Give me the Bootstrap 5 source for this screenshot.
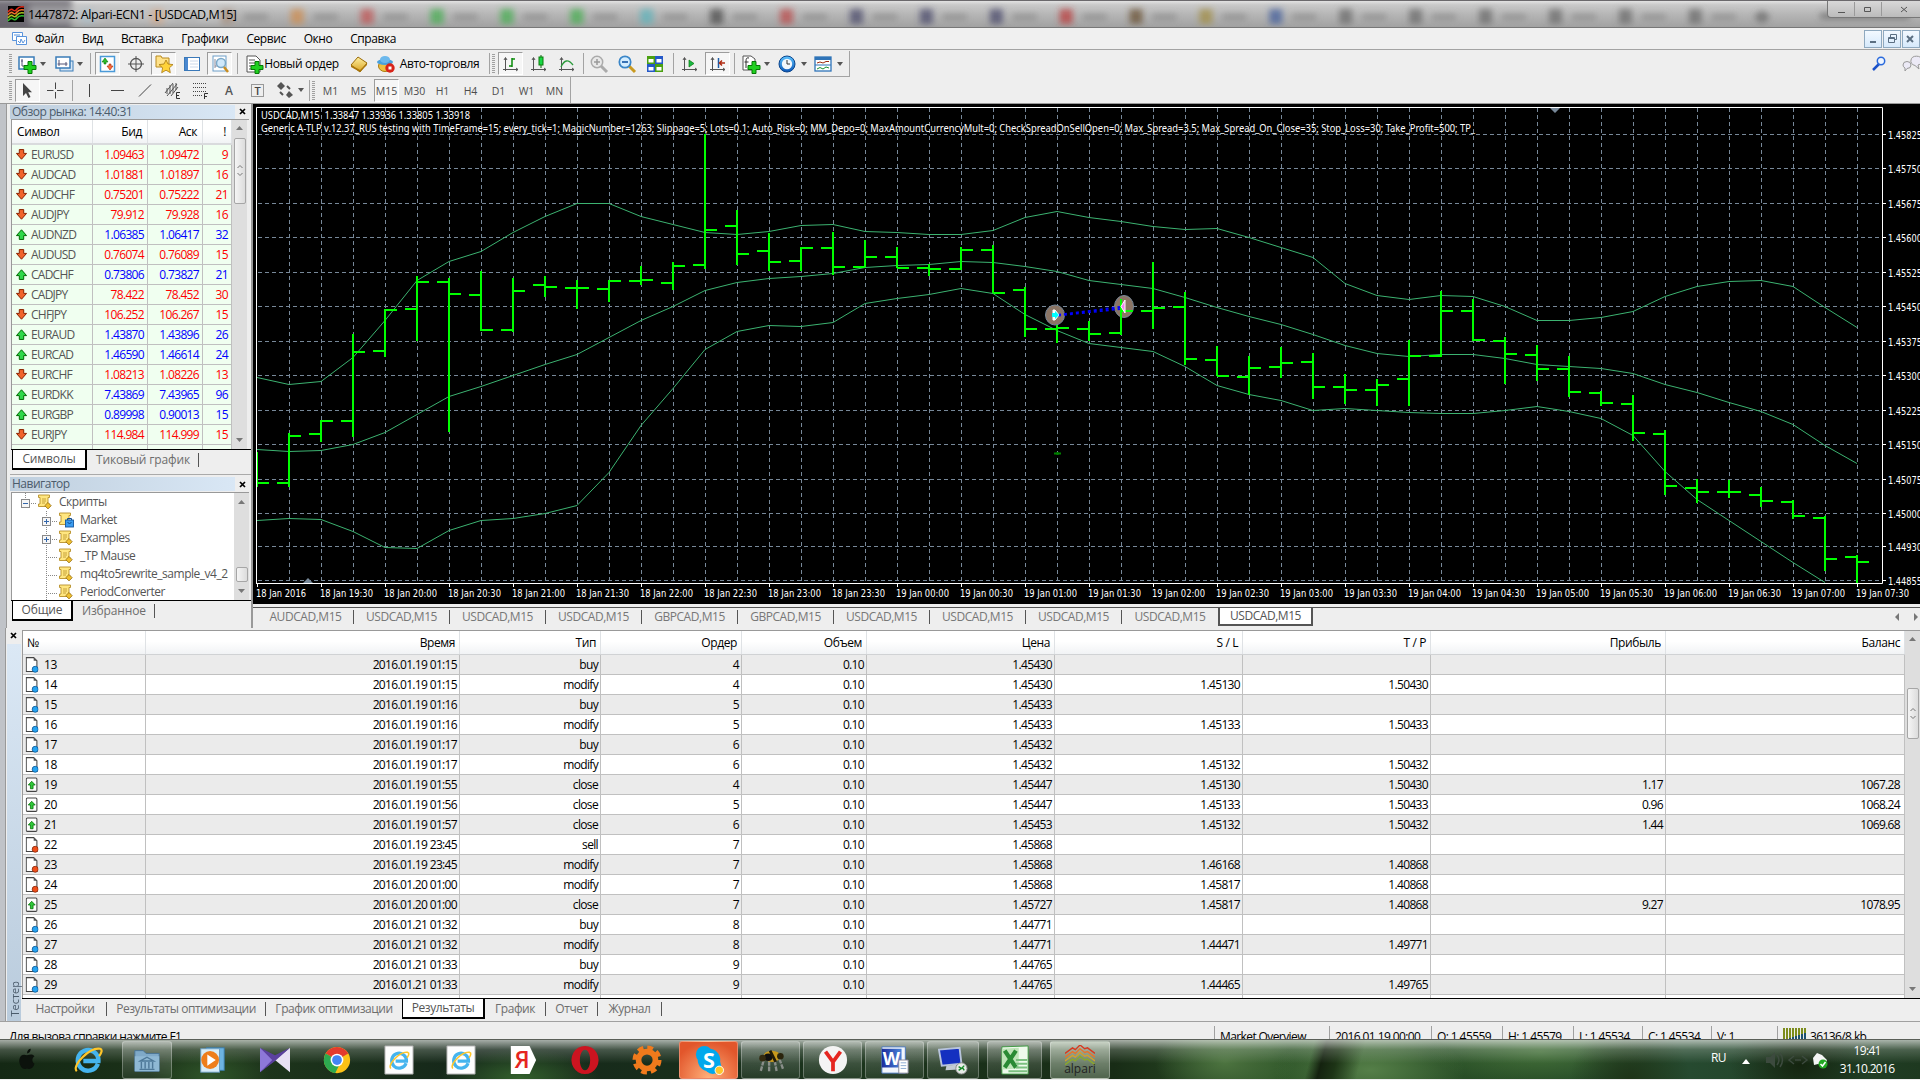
<!DOCTYPE html>
<html lang="ru">
<head>
  <meta charset="UTF-8" />
  <meta name="viewport" content="width=device-width, initial-scale=1.0" />
  <title>1447872: Alpari-ECN1 - [USDCAD,M15]</title>
  <link href="https://cdn.jsdelivr.net/npm/bootstrap@5.3.0/dist/css/bootstrap.min.css" rel="stylesheet" />
  <style>
    body {
      width: 1920px;
      height: 1080px;
      overflow: hidden;
      background: #eee;
      color: #000;
      font: 12px/1 "Open Sans", "Noto Sans", sans-serif;
      letter-spacing: -0.66px;
      white-space: nowrap;
    }

    svg { display: block; overflow: visible; flex: none; }
    .ms-px { margin-left: 1px; }

    /* title bar */
    .titlebar {
      height: 28px;
      border-top: 1px solid #6b696c;
      border-bottom: 1px solid #777;
      background: linear-gradient(#e2e2e2, #c9c9c9 15%, #b4b4b4 55%, #a2a2a2);
      overflow: hidden;
    }
    .titlebar .caption { font-size: 12.5px; letter-spacing: -0.42px; padding-top: 2px; }
    .winbtns {
      top: 0; right: 0; width: 93px; height: 17px;
      border: 1px solid #777; border-width: 0 0 1px 1px;
      border-bottom-left-radius: 4px;
      background: linear-gradient(#d8d8d8, #bbb);
    }

    /* menu and toolbars */
    .menubar { height: 22px; border-bottom: 1px solid #a3a3a3; background: #f0f0f0; padding-left: 12px; letter-spacing: -0.45px; }
    .menuitem { margin-right: 18px; }
    .mdibtn { width: 18px; height: 18px; border: 1px solid #8fa9bf; background: linear-gradient(#f3f9ff, #d6e9fb); }
    .toolline { height: 26px; padding-left: 7px; }
    .toolline.t1 { margin-top: 1px; letter-spacing: -0.35px; }
    .toolbox1 { width: 843px; border: 1px solid #a3a3a3; border-width: 0 1px 1px 0; height: 26px; }
    .toolbox2 { width: 564px; border-right: 1px solid #a3a3a3; height: 26px; }
    .grip { height: 19px; background: repeating-linear-gradient(#a0a0a0 0 1px, transparent 1px 2px); }
    .tsep { height: 21px; width: 1px; background: #a3a3a3; }
    .pressed {
      height: 23px;
      border: 1px solid #fff; border-top-color: #9c9c9c; border-left-color: #9c9c9c;
      background: #f6f6f6;
    }
    .tf { color: #4d4d4d; font-size: 10.5px; letter-spacing: 0; padding-top: 2px; }
    .caret { width: 0; border: 3px solid transparent; border-top: 4px solid #555; border-bottom: 0; }

    /* docked panels */
    #middle { height: 525px; border-top: 1px solid #999; }
    .edge { width: 7px; background: #c0c3c8; border-right: 1px solid #999; }
    .dock { width: 246px; border-right: 2px solid #999; padding-left: 3px; }
    .dockhead { height: 15px; }
    .docktitle { width: 225px; height: 14px; background: linear-gradient(90deg, #bfcfde, #d9e7f5); color: #4b5b6b; letter-spacing: -0.5px; padding-left: 2px; }
    .sunken { border: 1px solid #999; border-width: 1px 0 0 1px; width: 238px; margin-left: 1px; }
    #mwbox { height: 330px; }
    .mw { display: grid; grid-template-columns: 81px 55px 55px 29px; }
    .mwhead { height: 25px; border-bottom: 2px solid #d9dbdd; background: linear-gradient(#fff 45%, #f1f3f5); }
    .mwhead > div { border-right: 1px solid #dfe2e5; padding: 1px 5px 0; letter-spacing: -0.4px; }
    .mwrow { height: 20px; border-bottom: 1px solid #c0c0c0; background: #f0fff0; }
    .mwrow > div { border-right: 1px solid #c0c0c0; padding-right: 3px; }
    .mwrow .sym { color: #555; padding-left: 4px; letter-spacing: -0.75px; }
    .mwrow .sym span { margin-left: 4px; }
    .up { color: #00f; }
    .down { color: #f00; }
    .vscroll { width: 15px; background: #dedede; }
    .thumb { border: 1px solid #a6a6a6; border-radius: 2px; background: linear-gradient(90deg, #f5f5f5, #dcdcdc); }
    #mwthumb { width: 12px; height: 66px; margin-top: 1px; }
    #navthumb { width: 12px; height: 15px; }
    .pagetabs { border-top: 1px solid #000; color: #6d6d6d; letter-spacing: -0.15px; height: 22px; }
    .pagetab-on { border: 2px solid #000; border-width: 0 2px 2px 1px; background: #fff; height: 20px; color: #555; }
    .pagetext { height: 20px; }
    #ptab1 { width: 75px; margin-left: 1px; }
    #ptab2 { width: 61px; margin-left: 1px; }
    #navhead { margin-top: 3px; border-top: 1px solid #aaa; height: 18px; padding-top: 1px; }
    #navbox { height: 108px; }
    .bar-r { width: 1px; height: 14px; background: #555; }
    .treerow { height: 18px; color: #555; letter-spacing: -0.48px; }
    .treerow span { margin-left: 6px; }

    .charttabs { height: 18px; margin-top: 3px; border-top: 1px solid #555; color: #777; letter-spacing: -0.45px; }
    .charttab { width: 96px; }
    .charttab-on { width: 95px; height: 18px; background: #fff; border: 2px solid #555; border-width: 0 2px 2px 2px; color: #555; }

    /* tester */
    .tester { height: 393px; }
    .strip { width: 17px; }
    .stripbar { width: 14px; background: linear-gradient(#dbe8f5, #b9cbdc); margin-left: 1px; }
    .vtext { writing-mode: vertical-rl; transform: rotate(180deg); color: #4b5b6b; letter-spacing: 0; font-size: 11px; }
    #rsbox { height: 368px; border: 1px solid #999; border-width: 1px 0 0 1px; margin-top: 2px; }
    #report { width: 1882px; overflow: hidden; background: #fff; }
    #rsthumb { width: 12px; height: 51px; margin-top: 8px; }
    .rs { display: grid; grid-template-columns: 123px 314px 141px 141px 125px 188px 188px 188px 235px 239px; }
    .rshead { height: 24px; border-bottom: 1px solid #d0d2d4; background: linear-gradient(#fff 45%, #f1f3f5); }
    .rshead > div { border-right: 1px solid #dfe2e5; padding: 0 4px; letter-spacing: -0.4px; }
    .rsrow { height: 20px; border-bottom: 1px solid #c0c0c0; background: #fff; }
    .rsrow:nth-child(odd) { background: #ebebeb; }
    .rsrow > div { border-right: 1px solid #c0c0c0; padding: 0 2px; }
    .rsrow > div:first-child { letter-spacing: -0.3px; }
    .rsrow > div:last-child, .rshead > div:last-child { padding-right: 4px; }
    .rsrow span { margin-left: 5px; }
    #testertabs { letter-spacing: -0.45px; }

    .statusbar { height: 18px; border-top: 1px solid #a0a0a0; overflow: hidden; letter-spacing: -0.6px; }
    .statcell { border-left: 1px solid #a0a0a0; margin-top: 4px; height: 20px; padding: 5px 0 0 5px; }

    /* taskbar */
    .taskbar {
      height: 40px;
      border-top: 1px solid #5a5f58;
      color: #fff;
      background:
        linear-gradient(rgba(255,255,255,.62), rgba(255,255,255,.2) 25%, rgba(255,255,255,0) 60%),
        linear-gradient(105deg, transparent 1270px, #14220f 1282px, #1d3416 1296px, transparent 1320px),
        radial-gradient(ellipse 95px 40px at 1370px 30px, #557f48, transparent),
        radial-gradient(ellipse 70px 40px at 1225px 22px, #4d7440, transparent),
        radial-gradient(ellipse 60px 60px at 1630px 40px, #1e3418, transparent),
        radial-gradient(ellipse 110px 34px at 1540px 12px, #44703a, transparent),
        radial-gradient(ellipse 80px 30px at 520px 38px, #33602c, transparent),
        radial-gradient(ellipse 60px 30px at 210px 36px, #2f5529, transparent),
        radial-gradient(ellipse 70px 50px at 1800px 24px, #14240f, transparent),
        linear-gradient(90deg, #142814, #1e361b 12%, #15271a 25%, #1b341c 45%, #182c16 58%, #2f5629 66%, #264b25 80%, #264a30 88%, #1e3920);
    }
    .task { height: 38px; border: 1px solid rgba(255,255,255,.28); border-radius: 3px; background: linear-gradient(rgba(255,255,255,.28), rgba(255,255,255,.06)); }
    .task-hot { background: radial-gradient(circle at 50% 100%, #ffb07a, #e2562b 80%); }
    .task-on { background: linear-gradient(rgba(235,245,230,.6), rgba(150,170,145,.45)); }
    .tasklabel { position: absolute; bottom: 3px; left: 0; right: 0; text-align: center; color: #222; letter-spacing: 0; }
  </style>
</head>
<body>

<!-- icon sprite, every symbol on a 20x20 box -->
<svg width="0" height="0" class="position-absolute">
  <defs>
    <linearGradient id="gy" x2="0" y2="1"><stop stop-color="#fff0a0"/><stop offset="1" stop-color="#d8a220"/></linearGradient>
    <linearGradient id="gb" x2="0" y2="1"><stop stop-color="#5ec4ff"/><stop offset="1" stop-color="#0a56b8"/></linearGradient>
    <linearGradient id="gw" x2="1" y2="0"><stop stop-color="#1c2c9c"/><stop offset="1" stop-color="#4a84d8"/></linearGradient>
  </defs>
  <symbol id="i-plus" viewBox="0 0 20 20"><path d="M11 7.500h4v4h4v4h-4v4h-4v-4h-4v-4h4z" fill="#1fd01f" stroke="#067806"/></symbol>
  <symbol id="i-newchart" viewBox="0 0 20 20"><rect x="2" y="3" width="15" height="12" fill="#fff" stroke="#3a7cb8" stroke-width="1.5"/><path d="M5 5v7h9M4 7h2M12 10v3" stroke="#557" fill="none"/><use href="#i-plus"/></symbol>
  <symbol id="i-profiles" viewBox="0 0 20 20"><rect x="6" y="7" width="13" height="10" fill="#d5e6f5" stroke="#3a7cb8"/><rect x="2" y="3" width="14" height="11" fill="#fff" stroke="#3a7cb8" stroke-width="1.5"/><path d="M5 6v6M3.500 10h10M12 8v4" stroke="#557"/></symbol>
  <symbol id="i-updown" viewBox="0 0 20 20"><rect x="2.500" y="2.500" width="14" height="15" fill="#fff" stroke="#4a9ad8" stroke-width="1.500"/><path d="M4 8l3-4 3 4H8v2H6V8z" fill="#2dbb2d" stroke="#067806" stroke-width=".6"/><path d="M9 12l3 4 3-4h-2v-2h-2v2z" fill="#ff6a3a" stroke="#a22a06" stroke-width=".6"/></symbol>
  <symbol id="i-target" viewBox="0 0 20 20"><circle cx="10" cy="10" r="5.500" fill="none" stroke="#555" stroke-width="1.300"/><path d="M10 2v16M2 10h16" stroke="#555"/></symbol>
  <symbol id="i-favfolder" viewBox="0 0 20 20"><path d="M2 2h5l1 2h7v9H2z" fill="#ffe28a" stroke="#b88a20"/><path d="M12 6l2 4 5 .6-3.600 3.200.9 4.900-4.300-2.500-4.300 2.500.9-4.900L5 10.600l5-.6z" fill="#ffd23a" stroke="#a97a10" stroke-width=".8"/></symbol>
  <symbol id="i-window" viewBox="0 0 20 20"><rect x="2.500" y="3.500" width="15" height="13" fill="#fff" stroke="#3a78b8"/><path d="M3 4h3v12H3z" fill="#4a88d0"/><path d="M8 7h8M8 10h8M8 13h8" stroke="#ccd9ea"/></symbol>
  <symbol id="i-tester" viewBox="0 0 20 20"><rect x="3" y="2" width="13" height="15" fill="#fff" stroke="#6c9ec8"/><path d="M5 5v9M5 12h9" stroke="#889"/><circle cx="11" cy="9" r="4.500" fill="#cfe8fb" stroke="#7aa8c8" stroke-width="1.500"/><path d="M14 13l4 5" stroke="#c98d20" stroke-width="2.500"/></symbol>
  <symbol id="i-order" viewBox="0 0 20 20"><path d="M3 2h9l4 4v12H3z" fill="#fff" stroke="#555"/><path d="M5 6h6M5 9h8M5 12h4M5 15h3" stroke="#555"/><use href="#i-plus"/></symbol>
  <symbol id="i-gold" viewBox="0 0 20 20"><path d="M2 11L9 3l9 6-7 9z" fill="url(#gy)" stroke="#9a6a08"/><path d="M2 11l9 5 7-7v2l-7 7-9-5z" fill="#a9760c"/></symbol>
  <symbol id="i-auto" viewBox="0 0 20 20"><ellipse cx="9" cy="12" rx="6.500" ry="5.500" fill="#f0c040" stroke="#a97a10"/><ellipse cx="9" cy="8" rx="8" ry="3" fill="#4aa0dc"/><ellipse cx="9" cy="5.500" rx="5" ry="3.500" fill="#6cb8ec"/><circle cx="14" cy="14" r="4.700" fill="#d8241a"/><rect x="12.500" y="12.500" width="3" height="3" fill="#fff"/></symbol>
  <symbol id="i-axes" viewBox="0 0 20 20"><path d="M4.500 4v13M2 15.500h15M3 6l1.500-2.500L6 6M15 14l2 1.500-2 1.500" stroke="#555" fill="none"/></symbol>
  <symbol id="i-bars" viewBox="0 0 20 20"><use href="#i-axes"/><path d="M11 4v9M11 5h3M8 12h3" stroke="#0a8a0a" stroke-width="1.500"/></symbol>
  <symbol id="i-candle" viewBox="0 0 20 20"><use href="#i-axes"/><path d="M12 1v13" stroke="#0a6a0a"/><rect x="10" y="3" width="4" height="8" fill="#19d845" stroke="#0a7a0a"/></symbol>
  <symbol id="i-line" viewBox="0 0 20 20"><use href="#i-axes"/><path d="M4 13q5-11 12-2" stroke="#2a9a3a" stroke-width="1.300" fill="none"/></symbol>
  <symbol id="i-zin" viewBox="0 0 20 20"><path d="M12 12l6 6" stroke="#aaa" stroke-width="3"/><circle cx="8" cy="8" r="5.700" fill="#e8e8e8" stroke="#aaa" stroke-width="1.500"/><path d="M5 8h6M8 5v6" stroke="#999" stroke-width="1.500"/></symbol>
  <symbol id="i-zout" viewBox="0 0 20 20"><path d="M12 12l6 6" stroke="#c99a20" stroke-width="3"/><circle cx="8" cy="8" r="5.700" fill="#d4edff" stroke="#3a86c8" stroke-width="1.700"/><path d="M5 8h6" stroke="#1c5ca8" stroke-width="1.700"/></symbol>
  <symbol id="i-tile" viewBox="0 0 20 20"><path d="M2 2h8v8H2zM10 10h8v8h-8z" fill="#4aa010"/><path d="M10 2h8v8h-8zM2 10h8v8H2z" fill="#2458c8"/><path d="M3.500 5h5v3.500h-5zM11.500 5h5v3.500h-5zM3.500 13h5v3.500h-5zM11.500 13h5v3.500h-5z" fill="#fff"/></symbol>
  <symbol id="i-scroll" viewBox="0 0 20 20"><use href="#i-axes"/><path d="M9 6l5 3.500L9 13z" fill="#19b845" stroke="#0a7a0a" stroke-width=".7"/></symbol>
  <symbol id="i-shift" viewBox="0 0 20 20"><use href="#i-axes"/><path d="M10.500 4v10" stroke="#1c5ca8" stroke-width="1.500"/><path d="M17 9h-5M14 6.500L11.500 9l2.500 2.500" stroke="#b02a10" stroke-width="1.500" fill="none"/></symbol>
  <symbol id="i-indic" viewBox="0 0 20 20"><path d="M2 2h8l4 3v11H2z" fill="#fff" stroke="#555"/><path d="M8 4q-3-1-3 3v7M3.500 8h4" stroke="#333" fill="none"/><use href="#i-plus"/></symbol>
  <symbol id="i-clock" viewBox="0 0 20 20"><circle cx="10" cy="10" r="8" fill="url(#gb)" stroke="#0a448c"/><circle cx="10" cy="10" r="5.200" fill="#f2f7fc"/><path d="M10 6v4h3" stroke="#333" fill="none"/></symbol>
  <symbol id="i-templ" viewBox="0 0 20 20"><rect x="2" y="3" width="16" height="14" fill="#fff" stroke="#2f74b8" stroke-width="1.300"/><path d="M2 3h16v3H2z" fill="#2f74b8"/><path d="M2 11h16" stroke="#2f74b8"/><path d="M4 9l3-1 3 1 3-1.500h3" stroke="#a02a10" fill="none"/><path d="M4 15l3-1.500 3 1.500 3-2 3 1" stroke="#189030" fill="none"/></symbol>

  <symbol id="i-cursor" viewBox="0 0 20 20"><path d="M5 3v13l3-3 2.500 5 2-1-2.300-4.700H14z" fill="#444"/></symbol>
  <symbol id="i-cross" viewBox="0 0 20 20"><path d="M10.500 2.500V9M10.500 12v6.500M2 10.500h6.500M12 10.500h6.500" stroke="#444"/></symbol>
  <symbol id="i-vl" viewBox="0 0 20 20"><path d="M10.500 4v13" stroke="#444"/></symbol>
  <symbol id="i-hl" viewBox="0 0 20 20"><path d="M4 10.500h13" stroke="#444"/></symbol>
  <symbol id="i-tl" viewBox="0 0 20 20"><path d="M4 16.500L16 4.500" stroke="#444"/></symbol>
  <symbol id="i-chan" viewBox="0 0 20 20"><path d="M2 13L10 3M4 16L14 4M8 16l7-9M4 8v6M7 5v9M10 4v9M13 3v7" stroke="#555"/><path d="M17 12.500h-3.500v6H17M13.500 15.500H16" stroke="#333" fill="none"/></symbol>
  <symbol id="i-fibo" viewBox="0 0 20 20"><path d="M2 3.500h14M2 7.500h14M2 11.500h14M2 15.500h9" stroke="#444" stroke-dasharray="1 1"/><path d="M17 13.500h-3.500V19M13.500 16.500H16" stroke="#333" fill="none"/></symbol>
  <symbol id="i-arr" viewBox="0 0 20 20"><path d="M6 2l4 4-4 4-4-4zM14 11l4 4-4 3-3-3z" fill="#555"/><path d="M5 12l3 3M12 6l3 3" stroke="#555" stroke-width="2"/></symbol>

  <symbol id="i-down" viewBox="0 0 10 10"><path d="M3 .5h4v3.500h2.600L5 9.300.4 4H3z" fill="#f0642c" stroke="#8a2200" stroke-width=".9"/></symbol>
  <symbol id="i-up" viewBox="0 0 10 10"><path d="M3 9.500h4V6h2.600L5 .7.4 6H3z" fill="#2fd84a" stroke="#006a00" stroke-width=".9"/></symbol>
  <symbol id="i-script" viewBox="0 0 16 16"><path d="M1.500 1h11v2.500h-1.500v6.500h1.500v2.500h-11V10H3V3.500H1.500z" fill="#ffe680" stroke="#b8902a" stroke-width=".9"/><path d="M5 5h4M5 7h4M5 9h3" stroke="#b8902a" stroke-width=".8"/><path d="M11 8.500l3.200 3.200-3.200 3.200-3.200-3.200z" fill="#f0c030" stroke="#946c10" stroke-width=".8"/></symbol>
  <symbol id="i-scriptm" viewBox="0 0 16 16"><path d="M1.500 1h11v2.500h-1.500v6.500h1.500v2.500h-11V10H3V3.500H1.500z" fill="#ffe680" stroke="#b8902a" stroke-width=".9"/><rect x="7.500" y="8" width="8" height="7" fill="#3a9cf0" stroke="#1458a0" stroke-width=".9"/><path d="M9.500 8V6.500h4V8M9.500 10l2 2 2-2" stroke="#0f4a8c" fill="none"/></symbol>
  <symbol id="i-docb" viewBox="0 0 12 15"><path d="M.6.600h7l3 3v10H.6z" fill="#fff" stroke="#444"/><path d="M7.600.6v3h3" fill="#555"/><circle cx="9" cy="11.500" r="2.800" fill="#28a4f0" stroke="#0c5c9c" stroke-width=".8"/></symbol>
  <symbol id="i-docr" viewBox="0 0 12 15"><path d="M.6.600h7l3 3v10H.6z" fill="#fff" stroke="#444"/><path d="M7.600.6v3h3" fill="#555"/><circle cx="9" cy="11.500" r="2.800" fill="#f0501c" stroke="#8c2a0c" stroke-width=".8"/></symbol>
  <symbol id="i-docu" viewBox="0 0 12 15"><rect x=".6" y="1" width="10" height="12.500" rx="1" fill="#fff" stroke="#444"/><path d="M4.500 11h2.500V7.500h2L5.750 4 2.500 7.500h2z" fill="#2fc83a" stroke="#006a00" stroke-width=".7"/></symbol>

  <!-- taskbar icons, 32x32 -->
  <symbol id="t-apple" viewBox="0 0 32 32"><path d="M16 11c-7-3-9 4-8 8 1 5 4 8 8 6 4 2 7-1 8-5-3-2-3-6 0-8-2-3-5-2-8-1zM16 9c0-3 2-5 4-5 0 3-2 5-4 5z" fill="#0c120c"/></symbol>
  <symbol id="t-ie" viewBox="0 0 32 32"><path d="M26.500 20a11 11 0 1 1 .6-3H11" fill="none" stroke="#45b4ee" stroke-width="4.800"/><path d="M4 28C-2 22 18 2 29 4c3 1 1 5-1 8" fill="none" stroke="#ffc62a" stroke-width="2.300"/></symbol>
  <symbol id="t-folder" viewBox="0 0 32 32"><path d="M3 6h9l3 3h14v19H3z" fill="#7fa9c8" stroke="#4a7496"/><path d="M3 12h26v16H3z" fill="#8fb8d4"/><path d="M9 17l7-4 7 4zM10 18v7M14 18v7M18 18v7M22 18v7M8 26h16" stroke="#4e7898" fill="none" stroke-width="1.500"/></symbol>
  <symbol id="t-wmp" viewBox="0 0 32 32"><rect x="10" y="3" width="19" height="24" fill="#6db4e2" stroke="#3a7caa"/><rect x="4" y="4" width="20" height="25" fill="#d6ecf8" stroke="#6a9cc0"/><circle cx="14" cy="16" r="9.500" fill="#ee7d1a"/><path d="M11 10l9 6-9 6z" fill="#fff"/></symbol>
  <symbol id="t-km" viewBox="0 0 32 32"><path d="M0 3l16 13L0 29z" fill="#8d78d8"/><path d="M32 3L16 16l16 13z" fill="#e8e2f4"/><path d="M0 3l16 8L32 3 16 17 0 29l13-13z" fill="#5b419e"/></symbol>
  <symbol id="t-chrome" viewBox="0 0 32 32"><circle cx="16" cy="16" r="14" fill="#fbc116"/><path d="M16 16L3.900 9A14 14 0 0 1 28 9z" fill="#e33b2e"/><path d="M16 16L3.900 9A14 14 0 0 0 14 30l6-12z" fill="#2da94f"/><circle cx="16" cy="16" r="6.800" fill="#fff"/><circle cx="16" cy="16" r="5.200" fill="#4285f4"/></symbol>
  <symbol id="t-iefile" viewBox="0 0 32 32"><path d="M1 1h30v30H1z" fill="#fdfdfd" stroke="#aaa"/><use href="#t-ie" x="4" y="5" width="24" height="23"/></symbol>
  <symbol id="t-opera" viewBox="0 0 32 32"><path fill-rule="evenodd" d="M16 1a14.500 15 0 1 0 .01 0zM16 5a5.500 11 0 1 1-.01 0z" fill="#cc1420"/></symbol>
  <symbol id="t-gear" viewBox="0 0 32 32"><circle cx="16" cy="16" r="9" fill="none" stroke="#f07a1c" stroke-width="6"/><circle cx="16" cy="16" r="13" fill="none" stroke="#f07a1c" stroke-width="5" stroke-dasharray="6 4.200"/></symbol>
  <symbol id="t-bot" viewBox="0 0 32 32"><path d="M8 17l-3 11M14 17v11M20 17l2 11M25 15l4 11" stroke="#8a8f8a" stroke-width="2.500" stroke-dasharray="5 1"/><ellipse cx="17" cy="12" rx="9" ry="6" fill="#c89a1c"/><ellipse cx="13" cy="13" rx="4.500" ry="4" fill="#111"/><path d="M15 6l6 12" stroke="#221c08" stroke-width="3"/><circle cx="7" cy="14" r="3.500" fill="#332a10"/><circle cx="26" cy="12" r="3.500" fill="#2a240c"/></symbol>
  <symbol id="t-ybr" viewBox="0 0 32 32"><circle cx="16" cy="16" r="15" fill="#f4f4f4"/><path d="M8 7l8 11v10M24 7l-8 11" stroke="#e52620" stroke-width="4" fill="none"/></symbol>
  <symbol id="t-remote" viewBox="0 0 32 32"><path d="M1 5l22-2 2 17L4 22z" fill="#1430c0" stroke="#b8c4dc" stroke-width="2"/><path d="M9 22l10-1 3 5-14 1z" fill="#c4ccd4"/><circle cx="25" cy="25" r="6" fill="#e8ece8" stroke="#888"/><path d="M22 23l3 2-3 2M28 22l-2 2 2 3" stroke="#1a8a2a" fill="none" stroke-width="1.500"/></symbol>
  <symbol id="t-excel" viewBox="0 0 32 32"><path d="M2 2l28-1v30H2z" fill="#eefaec" stroke="#3c9a40"/><path d="M2 4l18-1v22L2 26z" fill="#bfe4b8"/><path d="M5 6l12 18M17 6L5 24" stroke="#2a8a34" stroke-width="4.500"/><path d="M17 16h12M17 20h12M17 24h12M9 28h20" stroke="#7cc080" stroke-width="2"/></symbol>
  <symbol id="t-alpari" viewBox="0 0 32 32"><g fill="none" stroke-width="1.500"><path d="M0 9l8-6 3 2 5-5 5 4 3-1 8 6" stroke="#d83820"/><path d="M0 13l8-6 3 2 5-5 5 4 3-1 8 6" stroke="#e8742c"/><path d="M0 17l8-6 3 2 5-5 5 4 3-1 8 6" stroke="#d0a030"/><path d="M0 21l8-6 3 2 5-5 5 4 3-1 8 6" stroke="#8aa82c"/></g></symbol>
</svg>

<!-- title bar -->
<div class="titlebar position-relative">
  <svg id="glass" class="position-absolute top-0 start-0" width="1920" height="27"></svg>
  <div class="position-relative d-flex align-items-center h-100 ps-2">
    <svg width="16" height="16" viewBox="0 0 16 16"><path d="M0 0h16v16H0z"/><g fill="none" stroke-width="1.600"><path d="M0 6q3-4 5-2t4-1 7-2" stroke="#e02a1a"/><path d="M0 9q3-4 5-2t4-1 7-2" stroke="#f0702a"/><path d="M0 12q3-4 5-2t4-1 7-2" stroke="#a8c020"/><path d="M0 15q3-4 5-2t4-1 7-2" stroke="#30c030"/></g></svg>
    <span class="caption ms-1">1447872: Alpari-ECN1 - [USDCAD,M15]</span>
  </div>
  <div class="winbtns position-absolute">
    <svg width="92" height="16" fill="none" stroke="#555"><path d="M26.500 1v14M53.500 1v14" stroke="#999"/><path d="M10 11.500h7M36.500 6.500h6v4h-6zM73 6l6 5M79 6l-6 5"/></svg>
  </div>
</div>

<!-- menu -->
<div class="menubar d-flex align-items-center">
  <svg width="15" height="15" viewBox="0 0 15 15" fill="#fff" stroke="#5a94dc"><path d="M.5 1.500h10v8H.5z"/><path d="M4.500 5.500h10v8h-10z"/><path d="M6 10l2 2 1-4 2 4 2-3M2 4h6" fill="none"/></svg>
  <div id="menu" class="d-flex flex-grow-1 ms-2"></div>
  <div class="d-flex overflow-hidden justify-content-start" id="mdi">
    <div class="mdibtn flex-shrink-0"><svg width="16" height="16"><path d="M5 11h6" stroke="#5b6f82" stroke-width="2"/></svg></div>
    <div class="mdibtn ms-px flex-shrink-0"><svg width="16" height="16" fill="none" stroke="#5b6f82"><path d="M6.500 6V3.500h6v5H10M4.500 6.500h6v5h-6zM4 7.500h6"/></svg></div>
    <div class="mdibtn ms-px flex-shrink-0"><svg width="16" height="16"><path d="M4 5l6 6M10 5l-6 6" stroke="#5b6f82" stroke-width="2"/></svg></div>
  </div>
</div>

<!-- toolbars -->
<div class="toolline t1 d-flex align-items-center">
  <div id="tools1" class="toolbox1 d-flex align-items-center"></div>
  <div class="d-flex ms-auto align-items-center gap-2">
    <svg width="14" height="16" viewBox="0 0 14 16"><path d="M1 14l6-6" stroke="#1a50c8" stroke-width="2.500"/><circle cx="9" cy="5" r="3.700" fill="#eef5ff" stroke="#2a6adc" stroke-width="1.500"/></svg>
    <svg class="ms-2" width="18" height="18" viewBox="0 0 18 18" fill="#eceaf6" stroke="#999"><path d="M9 5a5.500 4.500 0 1 1 7 5l1 4-4-3.500A5.500 4.500 0 0 1 9 5z"/><path d="M1 10a4 3.500 0 1 1 4 3.500L3 16v-3A4 3.500 0 0 1 1 10z"/></svg>
  </div>
</div>
<div class="toolline d-flex">
  <div id="tools2" class="toolbox2 d-flex align-items-center"></div>
</div>

<!-- middle: docks and chart -->
<div class="d-flex" id="middle">
  <div class="edge"></div>
  <div class="dock">
    <div class="dockhead d-flex align-items-center">
      <div class="docktitle d-flex align-items-center">Обзор рынка: 14:40:31</div>
      <svg class="ms-1" width="7" height="7"><path d="M1 1l5 5M6 1L1 6" stroke="#000" stroke-width="1.700"/></svg>
    </div>
    <div class="sunken d-flex" id="mwbox">
      <div class="overflow-hidden" id="market"></div>
      <div class="vscroll d-flex flex-column align-items-center">
        <svg width="7" height="17"><path d="M0 10l3.500-4L7 10z" fill="#777"/></svg>
        <div class="thumb d-flex align-items-center justify-content-center" id="mwthumb"><svg width="6" height="12" fill="none" stroke="#777"><path d="M.5 3L3 .5 5.500 3M.5 8L3 10.500 5.500 8"/></svg></div>
        <svg class="mt-auto" width="7" height="15"><path d="M0 4l3.500 4L7 4z" fill="#777"/></svg>
      </div>
    </div>
    <div class="pagetabs d-flex ms-px">
      <div class="pagetab-on d-flex align-items-center justify-content-center" id="ptab1">Символы</div>
      <div class="d-flex align-items-center pagetext ps-2 ms-px">Тиковый график<span class="bar-r ms-2"></span></div>
    </div>
    <div class="dockhead d-flex align-items-center" id="navhead">
      <div class="docktitle d-flex align-items-center">Навигатор</div>
      <svg class="ms-1" width="7" height="7"><path d="M1 1l5 5M6 1L1 6" stroke="#000" stroke-width="1.700"/></svg>
    </div>
    <div class="sunken d-flex bg-white" id="navbox">
      <div class="overflow-hidden flex-grow-1" id="tree"></div>
      <div class="vscroll d-flex flex-column align-items-center">
        <svg width="7" height="17"><path d="M0 11l3.500-4L7 11z" fill="#777"/></svg>
        <div class="thumb mt-auto" id="navthumb"></div>
        <svg width="7" height="18"><path d="M0 7l3.500 4L7 7z" fill="#777"/></svg>
      </div>
    </div>
    <div class="pagetabs d-flex ms-px">
      <div class="pagetab-on d-flex align-items-center justify-content-center" id="ptab2">Общие</div>
      <div class="d-flex align-items-center pagetext ps-2 ms-px">Избранное<span class="bar-r ms-2"></span></div>
    </div>
  </div>
  <div class="flex-grow-1">
    <svg id="chart" width="1667" height="500" viewBox="253 104 1667 500"></svg>
    <div class="charttabs d-flex align-items-center" id="charttabs"></div>
  </div>
</div>

<!-- strategy tester -->
<div class="tester d-flex">
  <div class="edge"></div>
  <div class="strip d-flex flex-column">
    <svg width="15" height="16"><path d="M5 5l5 5M10 5L5 10" stroke="#000" stroke-width="1.700"/></svg>
    <div class="stripbar flex-grow-1 d-flex align-items-end justify-content-center pb-1"><span class="vtext">Тестер</span></div>
  </div>
  <div class="flex-grow-1">
    <div class="d-flex" id="rsbox">
      <div id="report"></div>
      <div class="vscroll d-flex flex-column align-items-center">
        <svg width="7" height="49"><path d="M0 10l3.500-4L7 10z" fill="#777"/></svg>
        <div class="thumb d-flex align-items-center justify-content-center" id="rsthumb"><svg width="6" height="12" fill="none" stroke="#777"><path d="M.5 3L3 .5 5.500 3M.5 8L3 10.500 5.500 8"/></svg></div>
        <svg class="mt-auto" width="7" height="15"><path d="M0 4l3.500 4L7 4z" fill="#777"/></svg>
      </div>
    </div>
    <div class="pagetabs d-flex" id="testertabs"></div>
  </div>
</div>

<div class="statusbar d-flex" id="status"></div>
<div class="taskbar d-flex align-items-center" id="taskbar"></div>

<script>
  const icon = (id, s = 20, h = s) => `<svg width="${s}" height="${h}"><use href="#${id}"/></svg>`;
  const $ = id => document.getElementById(id);

  // icons that carry a letter
  const lettered = {
    'i-txt': '<text x="6" y="15" font-size="12" font-weight="600" fill="#555">A</text>',
    'i-lbl': '<rect x="4.500" y="4.500" width="12" height="12" fill="none" stroke="#444" stroke-dasharray="1 1"/><text x="7.500" y="14.500" font-size="11" font-weight="600" fill="#444">T</text>',
    't-ya': '<path d="M3 1h20l7 15-7 15H3z" fill="#fff"/><text x="7" y="25" font-size="25" font-weight="600" fill="#e52620">Я</text>',
    't-skype': '<circle cx="11" cy="10" r="9" fill="#00a8ec"/><circle cx="20" cy="22" r="9" fill="#00a8ec"/><circle cx="16" cy="16" r="12" fill="#00a8ec"/><text x="9.500" y="24" font-size="23" font-weight="700" fill="#fff">S</text><circle cx="27" cy="27" r="4.500" fill="#ffc62a" stroke="#fff"/>',
    't-word': '<path d="M2 2h25v28H2z" fill="#f2f6fc" stroke="#4a78c0"/><path d="M2 4h21v20H2z" fill="url(#gw)"/><text x="3" y="21" font-size="19" font-weight="700" fill="#fff">W</text><path d="M20 16h10v14H20z" fill="#fff" stroke="#889"/><path d="M22 19h6M22 22h6M22 25h6" stroke="#88a8d0"/>'
  };
  const draw = (id, s) => lettered[id] ? `<svg width="${s}" height="${s}" viewBox="0 0 ${id[0] === 't' ? '32 32' : '20 20'}">${lettered[id]}</svg>` : icon(id, s);

  // blurred browser tabs behind the glass
  const blobs = ['#8fb4c8', '#e08a4a', '#7a4a2a', '#d08a4a', '#c05050', '#3fae4a', '#3fae4a', '#3fae4a', '#5ab4bc', '#444', '#b44',
    '#446', '#446', '#446', '#b33', '#654a2a', '#a08a3a', '#3a5a9a', '#666', '#666', '#666', '#666', '#666', '#666'];
  $('glass').innerHTML = `<filter id="bl" x="-50%" width="200%" y="-50%" height="200%"><feGaussianBlur stdDeviation="3.2"/></filter><g filter="url(#bl)">
    <rect x="-10" y="-2" width="82" height="34" fill="#55535e" opacity=".75"/>` +
    blobs.map((c, i) => `<rect x="${81 + i * 69.9}" y="8" width="13" height="15" fill="${c}" opacity=".7"/><rect x="${104 + i * 69.9}" y="13" width="24" height="6" fill="#777" opacity=".5"/>`).join('') +
    `<rect x="30" y="5" width="205" height="18" fill="#ccc" opacity=".5"/><path d="M1755 16h14M1762 10v12M1820 15h90" stroke="#555" stroke-width="6" opacity=".6"/></g>`;

  $('menu').innerHTML = ['Файл', 'Вид', 'Вставка', 'Графики', 'Сервис', 'Окно', 'Справка'].map(t => `<span class="menuitem">${t}</span>`).join('');

  // toolbar description: [kind, width, icon or label]
  const tool = ([k, w, v]) => {
    const inner = k === 'sep' ? '<div class="tsep"></div>'
      : k === 'caret' ? '<div class="caret"></div>'
      : k === 'txt' ? v
      : k === 'tf' || k === 'tfon' ? `<span class="tf">${v}</span>`
      : v ? draw(v, 20) : '';
    const cls = k === 'grip' ? 'grip' : (k === 'on' || k === 'tfon') ? 'pressed' : '';
    return `<div class="d-flex align-items-center justify-content-center flex-shrink-0 ${cls}" style="width:${w}px">${inner}</div>`;
  };
  const gap = w => ['gap', w];
  $('tools1').innerHTML = [
    gap(2), ['grip', 3], gap(2), ['b', 25, 'i-newchart'], ['caret', 7], gap(5), ['b', 25, 'i-profiles'], ['caret', 7], gap(6), ['sep', 2], gap(4),
    ['on', 25, 'i-updown'], gap(3), ['b', 25, 'i-target'], gap(3), ['on', 25, 'i-favfolder'], gap(3), ['b', 25, 'i-window'], gap(3), ['on', 25, 'i-tester'],
    gap(4), ['sep', 2], gap(5), ['b', 21, 'i-order'], ['txt', 75, 'Новый ордер'], gap(7), ['b', 25, 'i-gold'], gap(2), ['b', 25, 'i-auto'], ['txt', 83, 'Авто-торговля'],
    gap(7), ['sep', 2], gap(2), ['grip', 3], gap(3), ['on', 25, 'i-bars'], gap(3), ['b', 25, 'i-candle'], gap(3), ['b', 25, 'i-line'], gap(3), ['sep', 2],
    gap(2), ['b', 25, 'i-zin'], gap(3), ['b', 25, 'i-zout'], gap(3), ['b', 25, 'i-tile'], gap(5), ['sep', 2], gap(3), ['b', 25, 'i-scroll'], gap(3),
    ['on', 25, 'i-shift'], gap(3), ['sep', 2], gap(3), ['b', 25, 'i-indic'], ['caret', 7], gap(4), ['b', 25, 'i-clock'], gap(1), ['caret', 7], gap(3), ['b', 25, 'i-templ'], gap(1), ['caret', 7]
  ].map(tool).join('');
  $('tools2').innerHTML = [
    gap(2), ['grip', 3], gap(3), ['on', 25, 'i-cursor'], gap(2), ['b', 25, 'i-cross'], gap(4), ['sep', 2], gap(3), ['b', 25, 'i-vl'], gap(3), ['b', 25, 'i-hl'],
    gap(3), ['b', 25, 'i-tl'], gap(3), ['b', 25, 'i-chan'], gap(3), ['b', 25, 'i-fibo'], gap(3), ['b', 25, 'i-txt'], gap(3), ['b', 25, 'i-lbl'], gap(3), ['b', 25, 'i-arr'],
    ['caret', 7], gap(4), ['sep', 2], gap(2), ['grip', 3], gap(3),
    ...['M1', 'M5', 'M15', 'M30', 'H1', 'H4', 'D1', 'W1', 'MN'].flatMap(t => [[t === 'M15' ? 'tfon' : 'tf', 25, t], gap(3)])
  ].map(tool).join('');

  // market watch
  const quotes = `EURUSD 1.09463 1.09472 9 d|AUDCAD 1.01881 1.01897 16 d|AUDCHF 0.75201 0.75222 21 d|AUDJPY 79.912 79.928 16 d|AUDNZD 1.06385 1.06417 32 u
|AUDUSD 0.76074 0.76089 15 d|CADCHF 0.73806 0.73827 21 u|CADJPY 78.422 78.452 30 d|CHFJPY 106.252 106.267 15 d|EURAUD 1.43870 1.43896 26 u|EURCAD 1.46590 1.46614 24 u
|EURCHF 1.08213 1.08226 13 d|EURDKK 7.43869 7.43965 96 u|EURGBP 0.89998 0.90013 15 u|EURJPY 114.984 114.999 15 d`.split('|').map(r => r.trim().split(' '));
  $('market').innerHTML = `<div class="mw mwhead"><div class="d-flex align-items-center">Символ</div>${['Бид', 'Аск', '!'].map(t => `<div class="d-flex align-items-center justify-content-end">${t}</div>`).join('')}</div>` +
    quotes.map(([s, b, a, n, d]) => {
      const up = d === 'u';
      return `<div class="mw mwrow"><div class="sym d-flex align-items-center">${icon(up ? 'i-up' : 'i-down', 11)}<span>${s}</span></div>` +
        [b, a, n].map(v => `<div class="d-flex align-items-center justify-content-end ${up ? 'up' : 'down'}">${v}</div>`).join('') + '</div>';
    }).join('') + '<div class="mw mwrow"><div></div><div></div><div></div><div></div></div>';

  // navigator tree
  const nodes = [['Скрипты', 'root', '-'], ['Market', 'm', '+'], ['Examples', '', '+'], ['_TP Mause', '', ''], ['mq4to5rewrite_sample_v4_2', '', ''], ['PeriodConverter', '', '']];
  $('tree').innerHTML = nodes.map(([t, kind, box]) => {
    const root = kind === 'root', x = root ? 13 : 34;
    const sign = box ? `<rect x="${x - 4}.500" y="6.500" width="8" height="8" fill="#f6f6f6" stroke="#888"/><path d="M${x - 2} 10.500h5${box === '+' ? `M${x + .5} 8v5` : ''}" stroke="#36a"/>` : '';
    const lines = `<path d="M${x + .5} 0v${root ? 9 : 18}M${x} 10.500h12" stroke="#888" stroke-dasharray="1 1"/>`;
    return `<div class="treerow d-flex align-items-center"><svg width="${root ? 25 : 46}" height="18" fill="none">${lines}${sign}</svg>${icon(kind === 'm' ? 'i-scriptm' : 'i-script', 16)}<span>${t}</span></div>`;
  }).join('');

  // chart: bars are [high, low, open, close] in pixel rows
  const bars = [[452,487,0,483],[433,487,483,436],[420,442,434,421],[334,437,421,352],[309,357,351,310],[276,341,309,282],[278,432,282,294],[271,331,295,330],[278,332,330,291],
    [276,297,285,287],[280,309,288,288],[280,302,289,281],[266,285,281,280],[262,290,283,266],[134,269,265,230],[210,265,226,254],[233,271,251,262],[247,271,261,248],[232,275,248,267],
    [240,267,267,257],[247,268,257,268],[264,276,268,269],[247,270,269,250],[245,293,250,293],[287,337,290,329],[325,343,329,328],[321,341,329,334],[299,335,333,311],[262,329,311,308],
    [292,365,307,359],[346,376,360,376],[356,395,377,368],[347,378,367,363],[353,399,362,387],[374,404,387,390],[379,406,390,385],[340,406,379,356],[291,357,356,311],[299,341,311,340],
    [337,384,341,354],[345,381,355,369],[356,397,369,392],[391,406,393,403],[395,441,404,433],[430,495,434,486],[479,503,488,492],[480,498,492,492],[487,507,495,501],[500,519,502,516],
    [516,571,518,559],[555,583,557,562]];
  const bands = [
    [377,384,381,357,320,280,261,251,232,216,203,203,216,224,232,234,231,225,224,231,232,234,234,230,217,211,217,221,226,229,228,237,247,257,283,295,299,295,296,306,320,320,317,311,296,286,281,280,286,307,327],
    [449,451,450,444,432,414,396,386,375,364,354,337,320,306,290,282,278,276,273,267,265,264,261,262,266,271,280,284,288,297,307,316,324,334,345,353,356,354,354,358,364,366,368,373,384,392,402,411,424,445,463],
    [520,518,519,531,547,548,530,520,518,513,505,472,425,388,349,331,325,326,322,303,298,294,288,293,314,330,343,347,351,366,385,394,400,410,408,410,412,413,413,410,406,411,418,435,471,499,520,541,562,582]];
  const gy = [134,168,203,237,272,306,341,375,410,444,479,513,546,580];
  const prices = ['1.45825','1.45750','1.45675','1.45600','1.45525','1.45450','1.45375','1.45300','1.45225','1.45150','1.45075','1.45000','1.44930','1.44855'];
  const bx = i => 257 + 32 * i;
  let s = '<rect x="253" y="104" width="1667" height="500"/>';
  for (let i = 1; i <= 50; i++) s += `<path d="M${bx(i) + .5} 108V583" stroke="#778899" stroke-dasharray="4 3"/>`;
  gy.forEach(y => s += `<path d="M258 ${y}.500H1882" stroke="#778899" stroke-dasharray="4 3"/><path d="M1883 ${y}.500h3" stroke="#fff"/>`);
  bands.forEach(b => s += `<polyline points="${b.map((y, i) => `${bx(i)},${y}.500`).join(' ')}" fill="none" stroke="#3cb371"/>`);
  s += `<path d="M1550 108h10l-5 5zM293 583h10l-5-5z" fill="#778899" transform="translate(0 0)"/>`.replace('M293', 'M303');
  s += '<ellipse cx="1055" cy="315" rx="9.500" ry="10" fill="#8b7565" stroke="#778899"/><ellipse cx="1124" cy="306.500" rx="9.500" ry="11" fill="#8b7565" stroke="#778899"/>';
  s += `<path d="${bars.map(([h, l, o, c], i) => `M${bx(i)} ${h}V${l}M${bx(i)} ${c}h12${o ? `M${bx(i) - 12} ${o}h12` : ''}`).join('')}" stroke="#0f0" stroke-width="2" fill="none"/>`;
  s += '<path d="M1058 315L1120 307M1058 315.500L1120 309" stroke="#00f" stroke-width="2" stroke-dasharray="3 3"/><path d="M1053 310h2l4 5-4 5h-2z" fill="#fff" stroke="#fff"/><path d="M1052 313h3v-2l4 4-4 4v-2h-3z" fill="#0ff"/>';
  s += '<path d="M1125 300v13l-4-6.500z" fill="#ee82ee" stroke="#fff"/><path d="M1054 453.500h7M1057.500 452v3" stroke="#008000" stroke-width="2"/>';
  s += '<path d="M256.500 584V107.500H1882.500V583.500H256" fill="none" stroke="#fff"/>';
  s += '<g fill="#fff" font-family="\'DejaVu Sans Condensed\',\'DejaVu Sans\',sans-serif" font-size="10" letter-spacing="0">';
  prices.forEach((p, i) => s += `<text x="1888" y="${gy[i] + 4.500}" textLength="34" lengthAdjust="spacingAndGlyphs">${p}</text>`);
  const times = ['18 Jan 2016'];
  for (let m = 19 * 60 + 30; m <= 31 * 60 + 30; m += 30)
    times.push(`${m < 1440 ? 18 : 19} Jan ${String(Math.floor(m / 60) % 24).padStart(2, '0')}:${m % 60 ? '30' : '00'}`);
  times.forEach((t, i) => s += `<path d="M${257 + 64 * i}.500 584v3" stroke="#fff"/><text x="${256 + 64 * i}" y="596.500" textLength="${i ? 53 : 50}" lengthAdjust="spacingAndGlyphs">${t}</text>`);
  s += '</g><g fill="#fff" font-family="\'Noto Sans\',sans-serif" font-size="10.500" letter-spacing="0">';
  s += '<text x="261" y="119" textLength="209" lengthAdjust="spacingAndGlyphs" xml:space="preserve">USDCAD,M15  1.33847 1.33936 1.33805 1.33918</text>';
  s += '<text x="261" y="132" textLength="1214" lengthAdjust="spacingAndGlyphs">Generic A-TLP v.12.37_RUS testing with TimeFrame=15; every_tick=1; MagicNumber=1263; Slippage=5; Lots=0.1; Auto_Risk=0; MM_Depo=0; MaxAmountCurrencyMult=0; CheckSpreadOnSellOpen=0; Max_Spread=3.5; Max_Spread_On_Close=35; Stop_Loss=30; Take_Profit=500; TP_</text></g>';
  $('chart').innerHTML = s;

  const ct = ['AUDCAD', 'USDCAD', 'USDCAD', 'USDCAD', 'GBPCAD', 'GBPCAD', 'USDCAD', 'USDCAD', 'USDCAD', 'USDCAD'];
  $('charttabs').innerHTML = '<div style="width:5px"></div>' + ct.map((t, i) => `<div class="charttab d-flex align-items-center"><span class="flex-grow-1 text-center">${t},M15</span>${i < 9 ? '<span class="bar-r"></span>' : ''}</div>`).join('') +
    '<div class="charttab-on d-flex align-items-center justify-content-center">USDCAD,M15</div><svg class="ms-auto" width="26" height="8" fill="#777"><path d="M5 0v8L1 4zM20 0v8l4-4z"/></svg>';

  // tester results
  const rows = `13|2016.01.19 01:15|buy|4|0.10|1.45430
14|2016.01.19 01:15|modify|4|0.10|1.45430|1.45130|1.50430
15|2016.01.19 01:16|buy|5|0.10|1.45433
16|2016.01.19 01:16|modify|5|0.10|1.45433|1.45133|1.50433
17|2016.01.19 01:17|buy|6|0.10|1.45432
18|2016.01.19 01:17|modify|6|0.10|1.45432|1.45132|1.50432
19|2016.01.19 01:55|close|4|0.10|1.45447|1.45130|1.50430|1.17|1067.28
20|2016.01.19 01:56|close|5|0.10|1.45447|1.45133|1.50433|0.96|1068.24
21|2016.01.19 01:57|close|6|0.10|1.45453|1.45132|1.50432|1.44|1069.68
22|2016.01.19 23:45|sell|7|0.10|1.45868
23|2016.01.19 23:45|modify|7|0.10|1.45868|1.46168|1.40868
24|2016.01.20 01:00|modify|7|0.10|1.45868|1.45817|1.40868
25|2016.01.20 01:00|close|7|0.10|1.45727|1.45817|1.40868|9.27|1078.95
26|2016.01.21 01:32|buy|8|0.10|1.44771
27|2016.01.21 01:32|modify|8|0.10|1.44771|1.44471|1.49771
28|2016.01.21 01:33|buy|9|0.10|1.44765
29|2016.01.21 01:33|modify|9|0.10|1.44765|1.44465|1.49765`.split('\n').map(r => r.split('|'));
  $('report').innerHTML = `<div class="rs rshead">${['№', 'Время', 'Тип', 'Ордер', 'Объем', 'Цена', 'S / L', 'T / P', 'Прибыль', 'Баланс'].map((t, i) => `<div class="d-flex align-items-center ${i ? 'justify-content-end' : ''}">${t}</div>`).join('')}</div><div>` +
    rows.concat([['']]).map(r => {
      const ic = r[2] === 'close' ? 'i-docu' : +r[0] >= 22 && +r[0] <= 24 ? 'i-docr' : 'i-docb';
      let h = `<div class="d-flex align-items-center">${r[0] ? `<svg width="14" height="16" viewBox="0 0 12 15"><use href="#${ic}"/></svg><span>${r[0]}</span>` : ''}</div>`;
      for (let i = 1; i < 10; i++) h += `<div class="d-flex align-items-center justify-content-end">${r[i] || ''}</div>`;
      return `<div class="rs rsrow">${h}</div>`;
    }).join('') + '</div>';

  // tab label and the full width of its cell
  $('testertabs').innerHTML = '<div style="width:2px"></div>' + [['Настройки', 83], ['Результаты оптимизации', 159], ['График оптимизации', 136], ['Результаты', 83, 1], ['График', 61], ['Отчет', 52], ['Журнал', 64]]
    .map(([t, w, on], i) => on ? `<div class="pagetab-on d-flex align-items-center justify-content-center" style="width:${w}px">${t}</div>`
      : `<div class="pagetext d-flex align-items-center" style="width:${w}px"><span class="flex-grow-1 text-center">${t}</span>${i === 2 ? '' : '<span class="bar-r"></span>'}</div>`).join('');

  $('status').innerHTML = '<div class="statcell border-0" style="width:1214px"><span class="ps-1">Для вызова справки нажмите F1</span></div>' +
    [['Market Overview', 115], ['2016.01.19 00:00', 102], ['O: 1.45559', 71], ['H: 1.45579', 71], ['L: 1.45534', 69], ['C: 1.45534', 69], ['V: 1', 66]].map(([t, w]) => `<div class="statcell flex-shrink-0" style="width:${w}px">${t}</div>`).join('') +
    '<div class="statcell d-flex"><svg width="23" height="16"><g stroke-width="2">' +
    [...Array(8)].map((_, i) => `<path d="M${1 + i * 3} ${-3}v${12 - i}" stroke="#7c8c1c"/><path d="M${1 + i * 3} ${9 - i}v12" stroke="#1c5070"/>`).join('') + '</g></svg><span class="ms-1">36136/8 kb</span></div>';

  // taskbar: [icon, cell width, button style]
  const tasks = [['t-apple', 54], gap(3), ['t-ie', 62], gap(3), ['t-folder', 50, 'task'], gap(10), ['t-wmp', 60], gap(2), ['t-km', 62], ['t-chrome', 62], ['t-iefile', 62], ['t-iefile', 62], ['t-ya', 62], ['t-opera', 62], ['t-gear', 62],
    gap(1), ['t-skype', 59, 'task task-hot'], gap(3), ['t-bot', 59, 'task'], gap(3), ['t-ybr', 59, 'task'], gap(3), ['t-word', 59, 'task'], gap(3), ['t-remote', 52, 'task'], gap(8), ['t-excel', 55, 'task'], gap(8), ['t-alpari', 60, 'task task-on']];
  $('taskbar').innerHTML = tasks.map(([ic, w, cls = '']) => ic === 'gap' ? `<div style="width:${w}px"></div>`
    : `<div class="d-flex align-items-center justify-content-center flex-shrink-0 position-relative ${cls}" style="width:${w}px">${draw(ic, 30)}${ic === 't-alpari' ? '<span class="tasklabel">alpari</span>' : ''}</div>`).join('') +
    `<div class="d-flex align-items-center ms-auto" style="width:209px"><span class="me-3 pb-1">RU</span>
      <svg width="8" height="6" class="mt-1"><path d="M0 5l4-5 4 5z" fill="#fff"/></svg>
      <svg class="ms-3" width="70" height="20"><g fill="#3c4a3e"><path d="M0 7h4l5-5v16l-5-5H0z"/></g><path d="M11 5q4 5 0 10M14 3q5 7 0 14M28 6l-5 4 5 4M36 6l5 4-5 4M29 10h6" fill="none" stroke="#3c4a3e" stroke-width="1.500"/><path d="M47 8l4-5 5 2 5 5-2 6-7-2-4 1z" fill="#f4f4f4"/><circle cx="57" cy="14" r="4.500" fill="#22a822"/><path d="M54.500 14l2 2 3-4" stroke="#fff" stroke-width="1.500" fill="none"/></svg>
      <div class="text-center lh-base ms-1"><div>19:41</div><div>31.10.2016</div></div></div>`;
</script>
<script src="https://cdn.jsdelivr.net/npm/bootstrap@5.3.0/dist/js/bootstrap.bundle.min.js"></script>
</body>
</html>
